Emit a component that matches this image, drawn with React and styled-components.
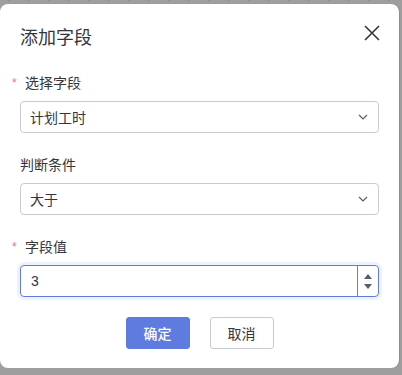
import React from "react";
import styled, { createGlobalStyle } from "styled-components";

const Global = createGlobalStyle`
  html, body { margin: 0; padding: 0; }
  body {
    background: #9e9e9e;
    font-family: "Liberation Sans", "Noto Sans CJK SC", sans-serif;
    width: 402px;
    height: 375px;
    overflow: hidden;
  }
`;

const Backdrop = styled.div`
  width: 402px;
  height: 375px;
  padding-top: 4px;
  box-sizing: border-box;
  background:
    repeating-linear-gradient(90deg, transparent 0 8px, #8f8f8f 8px 10px, transparent 10px 20px) top / 100% 1px no-repeat,
    #9e9e9e;
`;

const Dialog = styled.div`
  width: 399px;
  height: 364px;
  box-sizing: border-box;
  background: #fff;
  border-radius: 8px;
  padding: 20px 20px 19px 20px;
  display: flex;
  flex-direction: column;
  box-shadow: 1px 0 1px rgba(0, 0, 0, 0.12);
`;

const Header = styled.div`
  display: flex;
  align-items: center;
  justify-content: space-between;
  height: 24px;
  margin-bottom: 23px;
`;

const Title = styled.h2`
  margin: 0;
  font-size: 18px;
  font-weight: 400;
  line-height: 24px;
  color: #33363d;
  font-family: "Noto Sans CJK SC", sans-serif;
`;

const CloseButton = styled.button`
  width: 18px;
  height: 18px;
  padding: 0;
  border: 0;
  background: transparent;
  display: flex;
  align-items: center;
  justify-content: center;
  margin-right: -2px;
  margin-top: -6px;
`;

const FormItem = styled.div`
  display: flex;
  flex-direction: column;
  margin-bottom: 20px;
`;

const Label = styled.label`
  display: flex;
  align-items: center;
  height: 22px;
  margin-bottom: 8px;
  font-size: 14px;
  color: #33363d;
  font-family: "Noto Sans CJK SC", sans-serif;
`;

const Asterisk = styled.span`
  color: #f66f6a;
  font-size: 12px;
  margin-left: -8px;
  margin-right: 8px;
  width: 5px;
  font-family: "Liberation Sans", sans-serif;
  transform: translateY(1px);
`;

const SelectBox = styled.div`
  height: 32px;
  box-sizing: border-box;
  border: 1px solid #c9cbd0;
  border-radius: 4px;
  display: flex;
  align-items: center;
  justify-content: space-between;
  padding: 0 10px 0 9px;
  font-size: 14px;
  color: #33363d;
  font-family: "Noto Sans CJK SC", sans-serif;
`;

const NumberBox = styled.div`
  height: 32px;
  box-sizing: border-box;
  border: 1px solid #5e7ce0;
  border-radius: 4px;
  display: flex;
  align-items: stretch;
  box-shadow: 0 0 0 3px #eef2fd;
  font-size: 14px;
  color: #33363d;
`;

const NumberValue = styled.div`
  flex: 1;
  display: flex;
  align-items: center;
  padding-left: 10px;
  font-family: "Liberation Sans", sans-serif;
`;

const Spinner = styled.div`
  width: 20px;
  border-left: 1px solid #5e7ce0;
  display: flex;
  flex-direction: column;
  align-items: center;
  justify-content: center;
  gap: 5px;
`;

const Footer = styled.div`
  display: flex;
  justify-content: center;
  gap: 20px;
`;

const Button = styled.button`
  width: 64px;
  height: 32px;
  box-sizing: border-box;
  border-radius: 3px;
  font-size: 14px;
  font-family: "Noto Sans CJK SC", sans-serif;
  padding: 0;
  border: 1px solid ${(p) => (p.$primary ? "#5e7ce0" : "#c9cbd0")};
  background: ${(p) => (p.$primary ? "#5e7ce0" : "#fff")};
  color: ${(p) => (p.$primary ? "#fff" : "#33363d")};
  font-weight: ${(p) => (p.$primary ? 500 : 400)};
`;

const Chevron = () => (
  <svg width="10" height="6" viewBox="0 0 10 6">
    <path d="M1 1l4 4 4-4" fill="none" stroke="#575d6c" strokeWidth="1.2" />
  </svg>
);

const Field = ({ label, required, children }) => (
  <FormItem>
    <Label>
      {required && <Asterisk>*</Asterisk>}
      {label}
    </Label>
    {children}
  </FormItem>
);

export default function App() {
  return (
    <>
      <Global />
      <Backdrop>
        <Dialog>
          <Header>
            <Title>添加字段</Title>
            <CloseButton aria-label="close">
              <svg width="16" height="16" viewBox="0 0 16 16">
                <path d="M1 1L15 15M15 1L1 15" stroke="#33363d" strokeWidth="1.6" />
              </svg>
            </CloseButton>
          </Header>
          <Field label="选择字段" required>
            <SelectBox>
              <span>计划工时</span>
              <Chevron />
            </SelectBox>
          </Field>
          <Field label="判断条件">
            <SelectBox>
              <span>大于</span>
              <Chevron />
            </SelectBox>
          </Field>
          <Field label="字段值" required>
            <NumberBox>
              <NumberValue>3</NumberValue>
              <Spinner>
                <svg width="8" height="5" viewBox="0 0 8 5">
                  <path d="M0 5L4 0L8 5Z" fill="#575d6c" />
                </svg>
                <svg width="8" height="5" viewBox="0 0 8 5">
                  <path d="M0 0L8 0L4 5Z" fill="#575d6c" />
                </svg>
              </Spinner>
            </NumberBox>
          </Field>
          <Footer>
            <Button $primary>确定</Button>
            <Button>取消</Button>
          </Footer>
        </Dialog>
      </Backdrop>
    </>
  );
}
